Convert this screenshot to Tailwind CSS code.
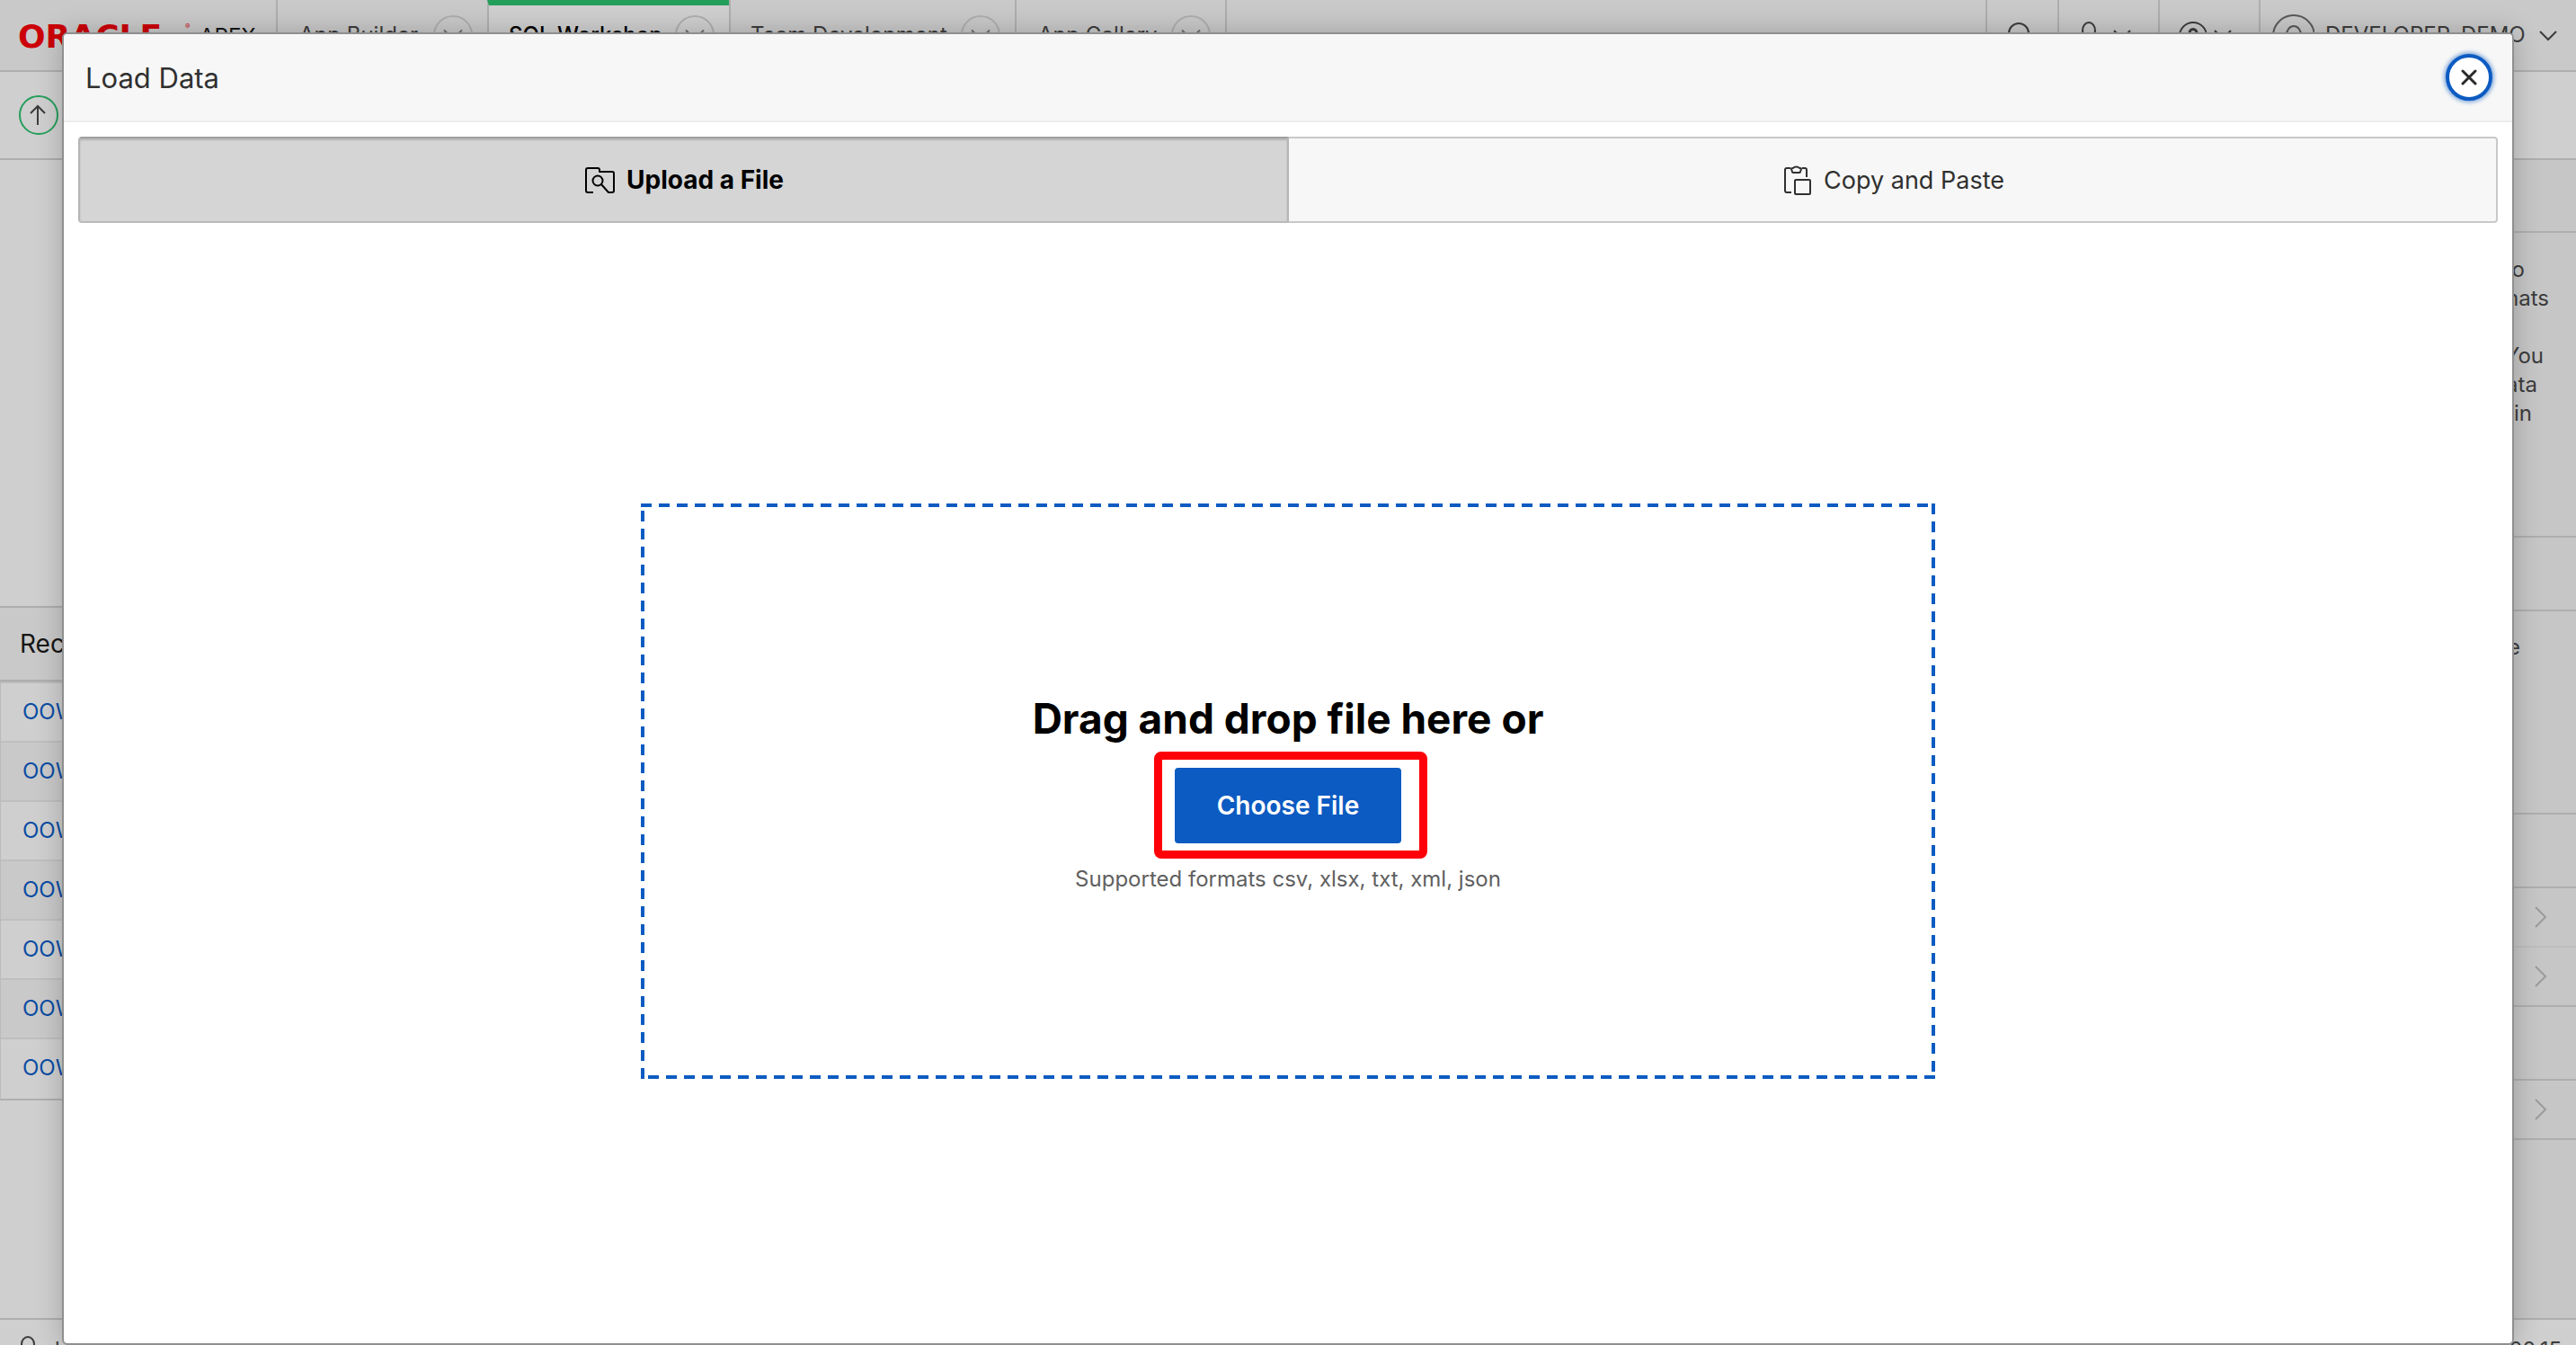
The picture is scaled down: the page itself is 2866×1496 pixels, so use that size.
<!DOCTYPE html>
<html lang="en">
<head>
<meta charset="utf-8">
<title>Load Data</title>
<script src="https://cdn.jsdelivr.net/npm/@tailwindcss/browser@4"></script>
</head>
<body class="relative flex h-screen flex-col overflow-hidden bg-[#cfcfcf] font-['Inter',sans-serif] text-2xl text-[#3c3c3c]">

<!-- Application header -->
<header class="flex h-20 shrink-0 items-stretch border-b-2 border-[#aeaeae] bg-[#c9c9c9]">
  <a href="#" class="flex w-[307px] shrink-0 items-center pt-1 pl-5">
    <span class="w-[186px] font-['DejaVu_Sans',sans-serif] text-[36px] leading-none font-bold text-[#cc0008]">ORACLE</span>
    <span class="-mt-6 w-4 text-[8px] leading-none text-[#cc0008]">®</span>
    <span class="text-2xl leading-none text-[#161616]">APEX</span>
  </a>
  <nav class="flex">
    <a href="#" class="flex w-[235px] items-center justify-between border-l-2 border-[#aeaeae] pr-4 pl-6">App Builder
      <svg class="size-[44px]" viewBox="0 0 44 44" fill="none" stroke-width="2"><circle cx="22" cy="22" r="21" stroke="#aeaeae"/><path d="M12 16.500l10 10 10-10" stroke="#6e6e6e"/></svg></a>
    <a href="#" class="flex w-[269px] items-center justify-between border-t-6 border-l-2 border-t-[#249e5b] border-l-[#aeaeae] bg-[#cfcfcf] pr-4 pb-[6px] pl-[22px] text-black font-medium">SQL Workshop
      <svg class="size-[44px]" viewBox="0 0 44 44" fill="none" stroke-width="2"><circle cx="22" cy="22" r="21" stroke="#aeaeae"/><path d="M12 16.500l10 10 10-10" stroke="#6e6e6e"/></svg></a>
    <a href="#" class="flex w-[318px] items-center justify-between border-l-2 border-[#aeaeae] pr-4 pl-[22px]">Team Development
      <svg class="size-[44px]" viewBox="0 0 44 44" fill="none" stroke-width="2"><circle cx="22" cy="22" r="21" stroke="#aeaeae"/><path d="M12 16.500l10 10 10-10" stroke="#6e6e6e"/></svg></a>
    <a href="#" class="flex w-[236px] items-center justify-between border-x-2 border-[#aeaeae] pr-4 pl-6">App Gallery
      <svg class="size-[44px]" viewBox="0 0 44 44" fill="none" stroke-width="2"><circle cx="22" cy="22" r="21" stroke="#aeaeae"/><path d="M12 16.500l10 10 10-10" stroke="#6e6e6e"/></svg></a>
  </nav>
  <div class="ml-auto flex">
    <button aria-label="Search" class="flex w-20 items-center justify-center border-l-2 border-[#aeaeae]">
      <svg class="size-8" viewBox="0 0 32 32" fill="none" stroke="#3c3c3c" stroke-width="2"><circle cx="12" cy="14" r="11"/><path d="M20 22l8 8"/></svg></button>
    <button aria-label="Administration" class="flex w-28 items-center gap-3 border-l-2 border-[#aeaeae] pl-4">
      <svg class="size-8" viewBox="0 0 32 32" fill="none" stroke="#3c3c3c" stroke-width="2"><ellipse cx="17" cy="11" rx="7" ry="9"/><path d="M3 31c1-8 6-9 10-10"/></svg>
      <svg class="size-5" viewBox="0 0 20 20" fill="none" stroke="#3c3c3c" stroke-width="2"><path d="M1 5l9 9 9-9"/></svg></button>
    <button aria-label="Help" class="flex w-28 items-center gap-2 border-l-2 border-[#aeaeae] pl-5">
      <svg class="size-8" viewBox="0 0 32 32" fill="none" stroke="#3c3c3c" stroke-width="2"><circle cx="17" cy="17" r="15"/><path d="M13 14c0-6 8-6 8 0 0 3-4 3-4 7" stroke-width="3"/></svg>
      <svg class="size-5" viewBox="0 0 20 20" fill="none" stroke="#3c3c3c" stroke-width="2"><path d="M1 5l9 9 9-9"/></svg></button>
    <button class="flex w-[353px] items-center border-l-2 border-[#aeaeae] pl-3">
      <svg class="size-12" viewBox="0 0 48 48" fill="none" stroke="#5a5a5a" stroke-width="2"><circle cx="25" cy="25" r="23"/><ellipse cx="25" cy="24" rx="8" ry="10"/></svg>
      <span class="ml-3 grow text-left">DEVELOPER_DEMO</span>
      <svg class="mr-[21px] size-5" viewBox="0 0 20 20" fill="none" stroke="#3c3c3c" stroke-width="2"><path d="M1 6l9 9 9-9"/></svg></button>
  </div>
</header>

<!-- Breadcrumb bar -->
<div class="flex h-[98px] shrink-0 items-center border-b-2 border-[#aeaeae] pl-[21px]">
  <button aria-label="Up" class="flex size-11 items-center justify-center rounded-full border-2 border-[#249e5b]">
    <svg class="size-6" viewBox="0 0 24 24" fill="none" stroke="#3c3c3c" stroke-width="2"><path d="M11 23V2M3 10l8-8 8 8"/></svg></button>
</div>

<!-- Page content behind the dialog -->
<main class="flex min-h-0 grow justify-between">
  <section class="w-[400px] pt-[496px]">
    <h2 class="flex h-[84px] items-center border-y-2 border-[#aeaeae] bg-[#c9c9c9] pt-0.5 pl-[22px] text-[28px] text-[#161616]">Rec</h2>
    <ul class="border-t-2 border-b-2 border-l border-t-[#bbbbbb] border-b-[#aeaeae] border-l-[#bbbbbb] text-[#0a4ca3] [&>li]:h-[66px] [&>li]:border-b-2 [&>li]:border-[#bfbfbf] [&>li]:pt-4 [&>li]:pl-6 [&>li:nth-child(even)]:bg-[#c9c9c9] [&>li:last-child]:border-b-0">
      <li><a href="#">OOW</a></li><li><a href="#">OOW</a></li><li><a href="#">OOW</a></li><li><a href="#">OOW</a></li><li><a href="#">OOW</a></li><li><a href="#">OOW</a></li><li><a href="#">OOW</a></li>
    </ul>
  </section>
  <aside class="w-[400px] bg-[#c6c6c6] text-right leading-8">
    <div class="h-[81px] border-b-2 border-[#aeaeae]"></div>
    <div class="h-[339px] border-b-2 border-[#aeaeae] pt-[25px]">
      <p class="pr-[57px]">to</p><p class="pr-[30px]">mats</p><p class="mt-8 pr-[36px]">You</p><p class="pr-[43px]">data</p><p class="pr-[49px]">in</p>
    </div>
    <div class="h-[82px] border-b-2 border-[#aeaeae]"></div>
    <div class="h-[226px] border-b-2 border-[#aeaeae] pt-6"><p class="pr-[62px]">e</p></div>
    <div class="h-[82px] border-b-2 border-[#aeaeae]"></div>
    <div class="flex h-[66px] items-center justify-end border-b-2 border-[#bdbdbd] pr-7"><svg class="size-6" viewBox="0 0 24 24" fill="none" stroke="#9b9b9b" stroke-width="2"><path d="M7 1l11 11L7 23"/></svg></div>
    <div class="flex h-[66px] items-center justify-end border-b-2 border-[#aeaeae] pr-7"><svg class="size-6" viewBox="0 0 24 24" fill="none" stroke="#9b9b9b" stroke-width="2"><path d="M7 1l11 11L7 23"/></svg></div>
    <div class="h-[82px] border-b-2 border-[#aeaeae]"></div>
    <div class="flex h-[66px] items-center justify-end border-b-2 border-[#aeaeae] pr-7"><svg class="size-6" viewBox="0 0 24 24" fill="none" stroke="#9b9b9b" stroke-width="2"><path d="M7 1l11 11L7 23"/></svg></div>
  </aside>
</main>
<footer class="flex h-[30px] shrink-0 justify-between overflow-hidden border-t-2 border-[#aeaeae] pt-[18px] pr-4 pl-4">
  <span class="flex gap-1"><svg class="size-8" viewBox="0 0 32 32" fill="none" stroke="#3c3c3c" stroke-width="2"><ellipse cx="15" cy="9" rx="7" ry="8"/></svg>d</span>
  <span>20.15</span>
</footer>

<!-- Load Data dialog -->
<div role="dialog" aria-labelledby="dialog-title" class="absolute inset-x-[69px] top-9 bottom-0 flex flex-col rounded-md border-2 border-[#8f8f8f] bg-white shadow-[0_0_30px_rgba(0,0,0,0.22)]">
  <div class="flex h-[98px] shrink-0 items-center justify-between rounded-t border-b-2 border-[#ededed] bg-[#f7f7f7] pr-[22px] pl-6">
    <h1 id="dialog-title" class="pt-0.5 text-[31px] text-[#303030]">Load Data</h1>
    <button aria-label="Close" class="flex size-[52px] items-center justify-center rounded-full border-4 border-[#0c5bc2] bg-white shadow-[0_0_4px_2px_rgba(12,91,194,0.5)]">
      <svg class="size-[18px]" viewBox="0 0 18 18" fill="none" stroke="#2a2a2a" stroke-width="3" stroke-linecap="round"><path d="M2 2l14 14M16 2L2 16"/></svg></button>
  </div>

  <div class="mx-4 mt-4 flex h-24 shrink-0">
    <button class="flex flex-1 items-center justify-center gap-3 rounded-l border-2 border-t-[#a0a0a0] border-r-[#b5b5b5] border-b-[#bababa] border-l-[#b5b5b5] bg-[#d5d5d5] pt-0.5 text-[28px] font-bold text-black shadow-[inset_0_2px_2px_rgba(0,0,0,0.15)]">
      <svg class="size-9" viewBox="0 0 36 36" fill="none" stroke="#000" stroke-width="2" stroke-linejoin="round"><path d="M11 31H5a2 2 0 0 1-2-2V6a2 2 0 0 1 2-2h11a2 2 0 0 1 2 2v2h14a2 2 0 0 1 2 2v19a2 2 0 0 1-2 2h-4l-8-9"/><circle cx="16" cy="18" r="5.500"/></svg>
      Upload a File
    </button>
    <button class="flex flex-1 items-center justify-center gap-3 rounded-r border-y-2 border-r-2 border-[#c9c9c9] bg-[#f7f7f7] pt-0.5 text-[27px] text-[#303030]">
      <svg class="size-9" viewBox="0 0 36 36" fill="none" stroke="#303030" stroke-width="2" stroke-linejoin="round"><path d="M12 31H7a2 2 0 0 1-2-2V6a2 2 0 0 1 2-2h4M24 4h3a2 2 0 0 1 2 2v8"/><path d="M13 4h1a4 3 0 0 1 7 0h1a1 1 0 0 1 1 1l-1 3a1 1 0 0 1-1 1h-7a1 1 0 0 1-1-1l-1-3a1 1 0 0 1 1-1z"/><rect x="16" y="17" width="17" height="16" rx="1"/></svg>
      Copy and Paste
    </button>
  </div>

  <div class="flex grow items-center justify-center pt-[18px]">
    <div class="relative flex h-[640px] w-full max-w-[1440px] flex-col items-center justify-center pt-1">
      <svg class="absolute inset-0 size-full" aria-hidden="true"><rect width="100%" height="100%" fill="none" stroke="#0c5bc2" stroke-width="8" stroke-dasharray="12 8"/></svg>
      <h2 class="text-[46px] leading-[58px] font-bold text-black">Drag and drop file here or</h2>
      <div class="relative mt-[26px]">
        <button class="h-[84px] w-[252px] rounded bg-[#0c5bc2] pt-0.5 text-[28px] font-semibold text-white">Choose File</button>
        <div class="pointer-events-none absolute -top-[18px] -right-[29px] -bottom-[17px] -left-[23px] rounded-lg border-9 border-[#ff0008]"></div>
      </div>
      <p class="mt-6 text-2xl text-[#606060]">Supported formats csv, xlsx, txt, xml, json</p>
    </div>
  </div>
</div>
</body>
</html>
